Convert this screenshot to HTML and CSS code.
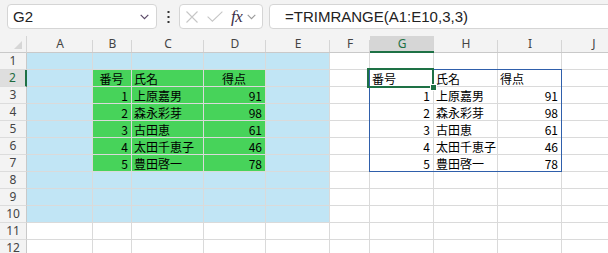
FILE: index.html
```html
<!DOCTYPE html>
<html lang="ja">
<head>
<meta charset="utf-8">
<link rel="stylesheet" href="styles.css">
</head>
<body>
<div class="toolbar">
  <div class="namebox">
    <span class="nb-text">G2</span>
    <svg class="nb-chev" width="9" height="6" viewBox="0 0 9 6"><polyline points="0.7,0.8 4.5,4.6 8.3,0.8" fill="none" stroke="#5b4a68" stroke-width="1.2"/></svg>
  </div>
  <div class="dots">
    <svg width="3" height="12" viewBox="0 0 3 12"><rect x="0.5" y="0" width="2" height="2" fill="#333"/><rect x="0.5" y="5" width="2" height="2" fill="#333"/><rect x="0.5" y="10" width="2" height="2" fill="#333"/></svg>
  </div>
  <div class="fxbox">
    <svg class="ic-x" width="12" height="12" viewBox="0 0 12 12"><path d="M0.5 0.5 L11.5 11.5 M11.5 0.5 L0.5 11.5" stroke="#c6c6c6" stroke-width="1.1" fill="none"/></svg>
    <svg class="ic-ok" width="16" height="11" viewBox="0 0 16 11"><polyline points="0.6,5.6 5.4,10.2 15.4,0.6" fill="none" stroke="#c6c6c6" stroke-width="1.1"/></svg>
    <span class="fx">fx</span>
    <svg class="ic-chev" width="9" height="6" viewBox="0 0 9 6"><polyline points="0.7,0.8 4.5,4.6 8.3,0.8" fill="none" stroke="#9a9a9a" stroke-width="1.1"/></svg>
  </div>
  <div class="formula">=TRIMRANGE(A1:E10,3,3)</div>
</div>

<div class="sheet">
  <div class="corner"><svg width="8" height="8" viewBox="0 0 8 8"><polygon points="8,0 8,8 0,8" fill="#d6d6d6"/></svg></div>
  <div class="ch">A</div><div class="ch">B</div><div class="ch">C</div><div class="ch">D</div><div class="ch">E</div><div class="ch">F</div><div class="ch sel">G</div><div class="ch">H</div><div class="ch">I</div><div class="ch">J</div>

  <div class="rh">1</div>
  <div class="c blue"></div><div class="c blue"></div><div class="c blue"></div><div class="c blue"></div><div class="c blue"></div>
  <div class="c"></div><div class="c"></div><div class="c"></div><div class="c"></div><div class="c"></div>

  <div class="rh sel">2</div>
  <div class="c blue"></div><div class="c grn ctr">番号</div><div class="c grn">氏名</div><div class="c grn ctr">得点</div><div class="c blue"></div>
  <div class="c"></div><div class="c">番号</div><div class="c">氏名</div><div class="c">得点</div><div class="c"></div>

  <div class="rh">3</div>
  <div class="c blue"></div><div class="c grn r">1</div><div class="c grn">上原嘉男</div><div class="c grn r">91</div><div class="c blue"></div>
  <div class="c"></div><div class="c r">1</div><div class="c">上原嘉男</div><div class="c r">91</div><div class="c"></div>

  <div class="rh">4</div>
  <div class="c blue"></div><div class="c grn r">2</div><div class="c grn">森永彩芽</div><div class="c grn r">98</div><div class="c blue"></div>
  <div class="c"></div><div class="c r">2</div><div class="c">森永彩芽</div><div class="c r">98</div><div class="c"></div>

  <div class="rh">5</div>
  <div class="c blue"></div><div class="c grn r">3</div><div class="c grn">古田恵</div><div class="c grn r">61</div><div class="c blue"></div>
  <div class="c"></div><div class="c r">3</div><div class="c">古田恵</div><div class="c r">61</div><div class="c"></div>

  <div class="rh">6</div>
  <div class="c blue"></div><div class="c grn r">4</div><div class="c grn">太田千恵子</div><div class="c grn r">46</div><div class="c blue"></div>
  <div class="c"></div><div class="c r">4</div><div class="c">太田千恵子</div><div class="c r">46</div><div class="c"></div>

  <div class="rh">7</div>
  <div class="c blue"></div><div class="c grn r">5</div><div class="c grn">豊田啓一</div><div class="c grn r">78</div><div class="c blue"></div>
  <div class="c"></div><div class="c r">5</div><div class="c">豊田啓一</div><div class="c r">78</div><div class="c"></div>

  <div class="rh">8</div>
  <div class="c blue"></div><div class="c blue"></div><div class="c blue"></div><div class="c blue"></div><div class="c blue"></div>
  <div class="c"></div><div class="c"></div><div class="c"></div><div class="c"></div><div class="c"></div>

  <div class="rh">9</div>
  <div class="c blue"></div><div class="c blue"></div><div class="c blue"></div><div class="c blue"></div><div class="c blue"></div>
  <div class="c"></div><div class="c"></div><div class="c"></div><div class="c"></div><div class="c"></div>

  <div class="rh">10</div>
  <div class="c blue"></div><div class="c blue"></div><div class="c blue"></div><div class="c blue"></div><div class="c blue"></div>
  <div class="c"></div><div class="c"></div><div class="c"></div><div class="c"></div><div class="c"></div>

  <div class="rh">11</div>
  <div class="c"></div><div class="c"></div><div class="c"></div><div class="c"></div><div class="c"></div>
  <div class="c"></div><div class="c"></div><div class="c"></div><div class="c"></div><div class="c"></div>

  <div class="rh">12</div>
  <div class="c"></div><div class="c"></div><div class="c"></div><div class="c"></div><div class="c"></div>
  <div class="c"></div><div class="c"></div><div class="c"></div><div class="c"></div><div class="c"></div>

  <div class="spill"></div>
  <div class="selbox"></div>
  <div class="handle"></div>
</div>
</body>
</html>
```

FILE: styles.css
```css
html, body {
  margin: 0;
  padding: 0;
  background: #ffffff;
}
body {
  width: 608px;
  height: 253px;
  overflow: hidden;
  font-family: "Noto Sans", "Liberation Sans", sans-serif;
}

/* ---------- formula bar ---------- */
.toolbar {
  display: flex;
  align-items: flex-start;
  height: 36px;
  box-sizing: border-box;
  padding-top: 4px;
  background: #f3f3f3;
}
.namebox {
  margin-left: 7px;
  width: 150px;
  height: 25px;
  box-sizing: border-box;
  border: 1px solid #d5d5d5;
  border-radius: 4px;
  background: #fff;
  display: flex;
  align-items: center;
  justify-content: space-between;
  padding: 0 7px 0 5px;
}
.nb-text {
  font-family: "Liberation Sans", sans-serif;
  font-size: 15px;
  color: #222;
}
.dots {
  width: 22px;
  height: 25px;
  display: flex;
  align-items: center;
  justify-content: center;
}
.fxbox {
  width: 84px;
  height: 25px;
  box-sizing: border-box;
  border: 1px solid #d5d5d5;
  border-radius: 4px;
  background: #fff;
  display: flex;
  align-items: center;
  padding-left: 6px;
}
.ic-ok { margin-left: 9px; }
.fx {
  margin-left: 8px;
  font-family: "Liberation Serif", serif;
  font-style: italic;
  font-size: 17px;
  color: #3c2f48;
  letter-spacing: -0.5px;
  line-height: 20px;
}
.ic-chev { margin-left: 5px; }
.formula {
  flex: 1;
  margin-left: 6px;
  margin-right: -10px;
  height: 25px;
  box-sizing: border-box;
  border: 1px solid #d5d5d5;
  border-radius: 4px;
  background: #fff;
  padding-left: 15px;
  font-family: "Liberation Sans", sans-serif;
  font-size: 15px;
  line-height: 23px;
  color: #222;
}

/* ---------- grid ---------- */
.sheet {
  position: relative;
  display: grid;
  grid-template-columns: 27px 66px 39px 72px 62px 64px 40px 64px 64px 64px 64px;
  grid-auto-rows: 17px;
}
.corner {
  background: #f3f3f3;
  border-bottom: 1px solid #c9c9c9;
  border-right: 1px solid #d5d5d5;
  box-sizing: border-box;
  display: flex;
  align-items: flex-end;
  justify-content: flex-end;
  padding: 0 4px 3px 0;
}
.ch {
  box-sizing: border-box;
  background: #f3f3f3 linear-gradient(#d5d5d5, #d5d5d5) right bottom / 1px 12px no-repeat;
  border-bottom: 1px solid #c9c9c9;
  font-size: 12px;
  line-height: 16px;
  text-align: center;
  color: #444;
}
.ch.sel {
  background-color: #d6d6d6;
  border-bottom: 2px solid #1e7145;
  color: #1e7145;
}
.rh {
  box-sizing: border-box;
  background: #f3f3f3;
  border-right: 1px solid #c9c9c9;
  border-bottom: 1px solid #dcdcdc;
  font-size: 12px;
  line-height: 16px;
  text-align: center;
  color: #444;
}
.rh.sel {
  background: #dedede;
  border-right: 2px solid #1e7145;
  color: #1e6b40;
}
.c {
  box-sizing: border-box;
  border-right: 1px solid #dadada;
  border-bottom: 1px solid #dadada;
  padding: 1px 3px 0 2px;
  font-family: "Noto Sans CJK JP", "Noto Sans", sans-serif;
  font-size: 12px;
  line-height: 15px;
  white-space: nowrap;
  color: #000;
}
.blue { background: #c1e5f5; }
.grn { background: #47d35a; }
.r { text-align: right; }
.ctr { text-align: center; }

/* ---------- overlays ---------- */
.spill {
  position: absolute;
  left: 369px;
  top: 33px;
  width: 193px;
  height: 103px;
  box-sizing: border-box;
  border: 1px solid #2f5fab;
}
.selbox {
  position: absolute;
  left: 367px;
  top: 32px;
  width: 67px;
  height: 20px;
  box-sizing: border-box;
  border: 2px solid #1e7145;
}
.handle {
  position: absolute;
  left: 430px;
  top: 48px;
  width: 7px;
  height: 7px;
  box-sizing: border-box;
  background: #1e7145;
  border: 1px solid #fff;
}
```
